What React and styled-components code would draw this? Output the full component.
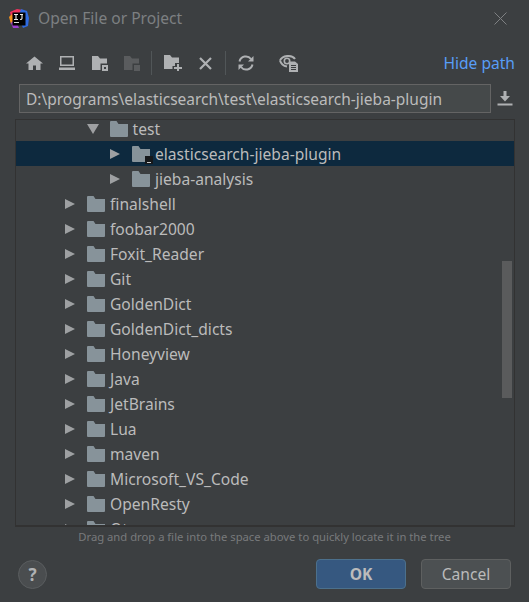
import React from 'react';
import styled, { createGlobalStyle } from 'styled-components';

const GlobalStyle = createGlobalStyle`
  html, body {
    margin: 0;
    padding: 0;
    background: #3c3f41;
  }
  * {
    box-sizing: border-box;
  }
`;

const Dialog = styled.div`
  width: 529px;
  height: 602px;
  overflow: hidden;
  display: flex;
  flex-direction: column;
  background: #3c3f41;
  color: #bbbbbb;
  font-family: "Noto Sans", "Open Sans", sans-serif;
`;

const TitleBar = styled.div`
  height: 37px;
  flex: none;
  display: flex;
  align-items: center;
  padding: 0 22px 0 9px;
`;

const TitleText = styled.span`
  margin: -2px 0 0 9px;
  font-size: 15.6px;
  color: #7d8082;
  flex: 1;
`;

const Toolbar = styled.div`
  height: 32px;
  margin-top: 10px;
  flex: none;
  display: flex;
  align-items: center;
  padding: 0 14px 0 18px;
`;

const ToolIcon = styled.span`
  width: 32.67px;
  height: 24px;
  flex: none;
  margin-left: ${(p) => p.$gap || 0}px;
  display: flex;
  align-items: center;
  justify-content: center;
`;

const ToolSeparator = styled.span`
  width: 1px;
  height: 24px;
  flex: none;
  margin: 0 ${(p) => p.$right}px 0 ${(p) => p.$left}px;
  background: #515658;
`;

const HidePath = styled.a`
  margin-left: auto;
  font-size: 15.6px;
  color: #589df6;
`;

const PathRow = styled.div`
  height: 29px;
  margin: 5px 0 0 19px;
  flex: none;
  display: flex;
  align-items: center;
`;

const PathField = styled.div`
  width: 472px;
  height: 29px;
  display: flex;
  align-items: center;
  padding-left: 6px;
  background: #45494a;
  border: 1px solid #646464;
  font-size: 15.5px;
  white-space: nowrap;
`;

const DownloadSlot = styled.span`
  width: 28px;
  display: flex;
  justify-content: center;
`;

const TreeBox = styled.div`
  position: relative;
  width: 500px;
  height: 408px;
  margin: 6px 0 0 15px;
  flex: none;
  overflow: hidden;
  border-top: 1px solid #323232;
  border-bottom: 2px solid #323232;
  border-left: 1px solid #323232;
  border-right: 1px solid #323232;
`;

const TreeRow = styled.div`
  height: 25px;
  display: flex;
  align-items: center;
  margin-top: ${(p) => (p.$first ? '-4px' : '0')};
  padding-left: ${(p) => 49 + p.$level * 22.5}px;
  background: ${(p) => (p.$selected ? '#0d293e' : 'transparent')};
  font-size: 15.6px;
  white-space: nowrap;
`;

const Arrow = styled.span`
  width: 0;
  height: 0;
  flex: none;
  ${(p) =>
    p.$open
      ? `
    border-left: 6px solid transparent;
    border-right: 6px solid transparent;
    border-top: 10px solid #9ea0a2;
    margin-left: -1px;
    margin-right: 11px;
  `
      : `
    border-top: 5.5px solid transparent;
    border-bottom: 5.5px solid transparent;
    border-left: 10px solid #9ea0a2;
    margin-right: 12px;
  `}
`;

const RowIcon = styled.span`
  position: relative;
  width: 18px;
  height: 16px;
  flex: none;
  margin-right: 5px;
  display: flex;
`;

const ModuleBadge = styled.span`
  position: absolute;
  right: -3px;
  bottom: -2px;
  width: 8px;
  height: 8px;
  background: #16181a;
  &::after {
    content: '';
    position: absolute;
    left: 2px;
    bottom: 1px;
    width: 4px;
    height: 1px;
    background: #c8c8c8;
  }
`;

const ScrollThumb = styled.div`
  position: absolute;
  top: 141px;
  right: 2px;
  width: 10px;
  height: 137px;
  background: #5a5b5c;
`;

const Hint = styled.div`
  margin-top: 1px;
  flex: none;
  text-align: center;
  font-size: 11.25px;
  line-height: 17px;
  color: #787a7c;
`;

const Footer = styled.div`
  margin-top: 14px;
  padding: 0 18px;
  flex: none;
  display: flex;
  align-items: center;
`;

const HelpButton = styled.span`
  width: 29px;
  height: 29px;
  flex: none;
  display: flex;
  align-items: center;
  justify-content: center;
  border-radius: 50%;
  background: #4a4d4f;
  border: 1px solid #5a5d5f;
  font-size: 17px;
  font-weight: 700;
  color: #b0b2b4;
`;

const Button = styled.button`
  width: 90px;
  height: 30px;
  padding: 0;
  margin-left: ${(p) => (p.$primary ? 'auto' : '15px')};
  border-radius: 4px;
  font-family: inherit;
  font-size: 15.6px;
  font-weight: ${(p) => (p.$primary ? 700 : 400)};
  color: #bbbbbb;
  background: ${(p) => (p.$primary ? '#365880' : '#4c5052')};
  border: 1px solid ${(p) => (p.$primary ? '#4c708c' : '#5e6060')};
`;

const LogoIcon = () => (
  <svg width="20" height="20" viewBox="0 0 20 20">
    <path d="M1 3 L8 0 L14 1 L7 8 L2 8Z" fill="#f0325e" />
    <path d="M12 0 L18 2 L20 9 L19 17 L14 19 L9 8Z" fill="#2f6be0" />
    <path d="M0 8 L3 5 L5 12 L2 15Z" fill="#f7941d" />
    <path d="M2 14 L6 10 L10 19 L4 19Z" fill="#9c3fd0" />
    <rect x="3.5" y="3.5" width="13" height="13" fill="#000" />
    <rect x="5" y="13" width="5" height="1" fill="#ddd" />
    <path d="M5 5.5 h4 M7 5.5 v5 M5 10.5 h4 M11 5.5 h3 M13 5.5 v4 q0 1 -2 1" stroke="#eee" strokeWidth="1.1" fill="none" />
  </svg>
);

const CloseIcon = () => (
  <svg width="13" height="13" viewBox="0 0 13 13">
    <path d="M0.5 0.5 L12.5 12.5 M12.5 0.5 L0.5 12.5" stroke="#7f8183" strokeWidth="1" fill="none" />
  </svg>
);

const HomeIcon = () => (
  <svg width="17" height="14" viewBox="0 0 17 14">
    <path d="M8.5 0.5 L17 7.5 H14.5 V14 H10 V9.5 H7 V14 H2.5 V7.5 H0 Z" fill="#afb1b3" />
  </svg>
);

const DesktopIcon = () => (
  <svg width="16" height="14" viewBox="0 0 16 14">
    <path d="M1 0 H15 V10 H1 Z M2.5 1.5 V8.5 H13.5 V1.5 Z" fill="#afb1b3" fillRule="evenodd" />
    <rect x="0" y="11.5" width="16" height="2.5" fill="#afb1b3" />
  </svg>
);

const FolderBox = ({ dim }) => {
  const main = dim ? '#5a5c5e' : '#afb1b3';
  return (
    <svg width="16" height="15" viewBox="0 0 16 15">
      <path d="M0 0 H6 L8 2.5 H15 V7.5 H8.5 V14 H0 Z" fill={main} />
      <path d="M10 9 H16 V15 H10 Z" fill={main} />
      {!dim && <rect x="12" y="11" width="2" height="2" fill="#3c3f41" />}
    </svg>
  );
};

const NewFolderIcon = () => (
  <svg width="18" height="16" viewBox="0 0 18 16">
    <path d="M0 0 H6 L8 2.5 H15 V8 H11 V11 H8.5 V14 H0 Z" fill="#afb1b3" />
    <path d="M13 9 H15 V12 H18 V14 H15 V16 H13 V14 H10 V12 H13 Z" fill="#afb1b3" />
  </svg>
);

const DeleteIcon = () => (
  <svg width="13" height="13" viewBox="0 0 13 13">
    <path d="M1 1 L12 12 M12 1 L1 12" stroke="#afb1b3" strokeWidth="2.2" fill="none" />
  </svg>
);

const RefreshIcon = () => (
  <svg width="16" height="16" viewBox="0 0 16 16" fill="none">
    <path d="M1.5 6.5 A6.5 6.5 0 0 1 13 4" stroke="#afb1b3" strokeWidth="2" />
    <path d="M14.5 9.5 A6.5 6.5 0 0 1 3 12" stroke="#afb1b3" strokeWidth="2" />
    <path d="M10 6.5 H15.5 V1 Z" fill="#afb1b3" />
    <path d="M6 9.5 H0.5 V15 Z" fill="#afb1b3" />
  </svg>
);

const EyeFileIcon = () => (
  <svg width="20" height="18" viewBox="0 0 20 18" fill="none">
    <path d="M1 6.5 C3 1.5 13 0 16 5" stroke="#afb1b3" strokeWidth="2" />
    <path d="M1 6.5 C2 10 5 12 8 12.5" stroke="#afb1b3" strokeWidth="2" />
    <circle cx="8" cy="7" r="2.7" stroke="#afb1b3" strokeWidth="1.6" />
    <path d="M10 7.5 H16 L19 10 V18 H10 Z" fill="#afb1b3" />
    <path d="M12 11.5 H17 M12 13.5 H17 M12 15.5 H17" stroke="#3c3f41" strokeWidth="1" />
  </svg>
);

const DownloadIcon = () => (
  <svg width="16" height="15" viewBox="0 0 16 15">
    <path d="M6.5 0 H9.5 V5 H13 L8 10.5 L3 5 H6.5 Z" fill="#afb1b3" />
    <rect x="0.5" y="12.5" width="15" height="2" fill="#afb1b3" />
  </svg>
);

const FolderIcon = () => (
  <svg width="18" height="16" viewBox="0 0 18 16">
    <path d="M0 1 Q0 0 1 0 H6.5 L8.5 3 H18 V15 Q18 16 17 16 H1 Q0 16 0 15 Z" fill="#87939a" />
  </svg>
);

const rows = [
  { name: 'test', level: 1, open: true },
  { name: 'elasticsearch-jieba-plugin', level: 2, selected: true, module: true },
  { name: 'jieba-analysis', level: 2 },
  { name: 'finalshell', level: 0 },
  { name: 'foobar2000', level: 0 },
  { name: 'Foxit_Reader', level: 0 },
  { name: 'Git', level: 0 },
  { name: 'GoldenDict', level: 0 },
  { name: 'GoldenDict_dicts', level: 0 },
  { name: 'Honeyview', level: 0 },
  { name: 'Java', level: 0 },
  { name: 'JetBrains', level: 0 },
  { name: 'Lua', level: 0 },
  { name: 'maven', level: 0 },
  { name: 'Microsoft_VS_Code', level: 0 },
  { name: 'OpenResty', level: 0 },
  { name: 'Qt', level: 0 },
];

const App = () => (
  <Dialog>
    <GlobalStyle />
    <TitleBar>
      <LogoIcon />
      <TitleText>Open File or Project</TitleText>
      <CloseIcon />
    </TitleBar>
    <Toolbar>
      <ToolIcon><HomeIcon /></ToolIcon>
      <ToolIcon><DesktopIcon /></ToolIcon>
      <ToolIcon><FolderBox /></ToolIcon>
      <ToolIcon><FolderBox dim /></ToolIcon>
      <ToolSeparator $left={2} $right={5} />
      <ToolIcon><NewFolderIcon /></ToolIcon>
      <ToolIcon><DeleteIcon /></ToolIcon>
      <ToolSeparator $left={3} $right={4} />
      <ToolIcon><RefreshIcon /></ToolIcon>
      <ToolIcon $gap={10}><EyeFileIcon /></ToolIcon>
      <HidePath>Hide path</HidePath>
    </Toolbar>
    <PathRow>
      <PathField>D:\programs\elasticsearch\test\elasticsearch-jieba-plugin</PathField>
      <DownloadSlot><DownloadIcon /></DownloadSlot>
    </PathRow>
    <TreeBox>
      {rows.map((row, i) => (
        <TreeRow key={row.name} $first={i === 0} $level={row.level} $selected={row.selected}>
          <Arrow $open={row.open} />
          <RowIcon>
            <FolderIcon />
            {row.module && <ModuleBadge />}
          </RowIcon>
          {row.name}
        </TreeRow>
      ))}
      <ScrollThumb />
    </TreeBox>
    <Hint>Drag and drop a file into the space above to quickly locate it in the tree</Hint>
    <Footer>
      <HelpButton>?</HelpButton>
      <Button $primary>OK</Button>
      <Button>Cancel</Button>
    </Footer>
  </Dialog>
);

export default App;
